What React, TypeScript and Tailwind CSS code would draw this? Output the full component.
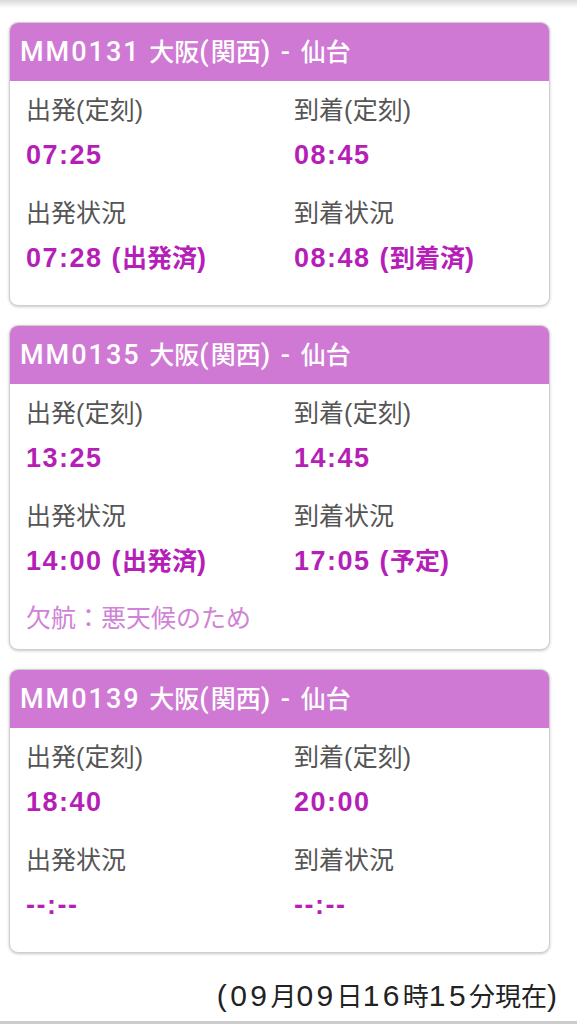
import React from "react";

type Flight = {
  no: string;
  dep: string;
  arr: string;
  depStatus: string;
  arrStatus: string;
  note?: string;
};

const flights: Flight[] = [
  { no: "MM0131", dep: "07:25", arr: "08:45", depStatus: "07:28 (出発済)", arrStatus: "08:48 (到着済)" },
  { no: "MM0135", dep: "13:25", arr: "14:45", depStatus: "14:00 (出発済)", arrStatus: "17:05 (予定)", note: "欠航：悪天候のため" },
  { no: "MM0139", dep: "18:40", arr: "20:00", depStatus: "--:--", arrStatus: "--:--" },
];

const jp = { fontFamily: '"Liberation Sans", "Noto Sans CJK JP", sans-serif' };
const head = { fontFamily: 'Roboto, "Noto Sans CJK JP", sans-serif' };

// Split text into ASCII / non-ASCII runs; ASCII runs get their own (wider) styling
function Spaced({ text, cls }: { text: string; cls: string }) {
  const parts = text.split(/([\x00-\x7F]+)/).filter((p) => p.length > 0);
  return (
    <>
      {parts.map((p, i) =>
        /^[\x00-\x7F]+$/.test(p) ? (
          <span key={i} className={cls}>
            {p}
          </span>
        ) : (
          <span key={i}>{p}</span>
        )
      )}
    </>
  );
}

function Cell({ label, value, top }: { label: string; value: string; top?: boolean }) {
  return (
    <div className={top ? "" : "mt-[24px]"}>
      <div className="h-[34px] whitespace-nowrap text-[25px] leading-[34px] text-[#555555]">
        <Spaced text={label} cls="tracking-[0.5px]" />
      </div>
      <div className="mt-[11px] h-[34px] whitespace-nowrap text-[25px] font-bold leading-[34px] text-[#b51fb8]">
        <Spaced text={value} cls="text-[27px] tracking-[1.5px]" />
      </div>
    </div>
  );
}

function Card({ f }: { f: Flight }) {
  return (
    <div className="overflow-hidden rounded-[9px] border border-[#cfcfcf] bg-white shadow-[0_1px_3px_rgba(0,0,0,0.22)]">
      <div
        className="flex h-[58px] items-center whitespace-pre bg-[#cf79d4] px-[10px] text-[25px] font-medium text-white"
        style={head}
      >
        <span>
          <Spaced text={`${f.no} 大阪(関西) - 仙台`} cls="text-[27px] tracking-[2px]" />
        </span>
      </div>
      <div className="px-[16px] pb-[14px] pt-[12px]" style={jp}>
        <div className="grid grid-cols-[268px_1fr]">
          <Cell label="出発(定刻)" value={f.dep} top />
          <Cell label="到着(定刻)" value={f.arr} top />
          <Cell label="出発状況" value={f.depStatus} />
          <Cell label="到着状況" value={f.arrStatus} />
        </div>
        {f.note ? (
          <div className="mt-[23px] h-[34px] text-[25px] leading-[34px] text-[#d083d6]">{f.note}</div>
        ) : (
          <div className="h-[16px]" />
        )}
      </div>
    </div>
  );
}

export default function App() {
  return (
    <div className="relative h-[1024px] w-[577px] overflow-hidden bg-white">
      <div className="absolute left-0 right-0 top-0 h-[8px] bg-gradient-to-b from-[#d9d9d9] to-white" />
      <div className="flex flex-col gap-[19px] pl-[9px] pr-[27px] pt-[22px]">
        {flights.map((f) => (
          <Card key={f.no} f={f} />
        ))}
      </div>
      <div
        className="mt-[26px] whitespace-nowrap pr-[20px] text-right text-[26px] leading-[34px] text-[#222222]"
        style={jp}
      >
        <Spaced text="(09月09日16時15分現在" cls="text-[30px] tracking-[3.4px]" />
        <span className="text-[30px]">)</span>
      </div>
      <div className="absolute bottom-0 left-0 right-0 h-[3px] bg-[#cccccc]" />
    </div>
  );
}
